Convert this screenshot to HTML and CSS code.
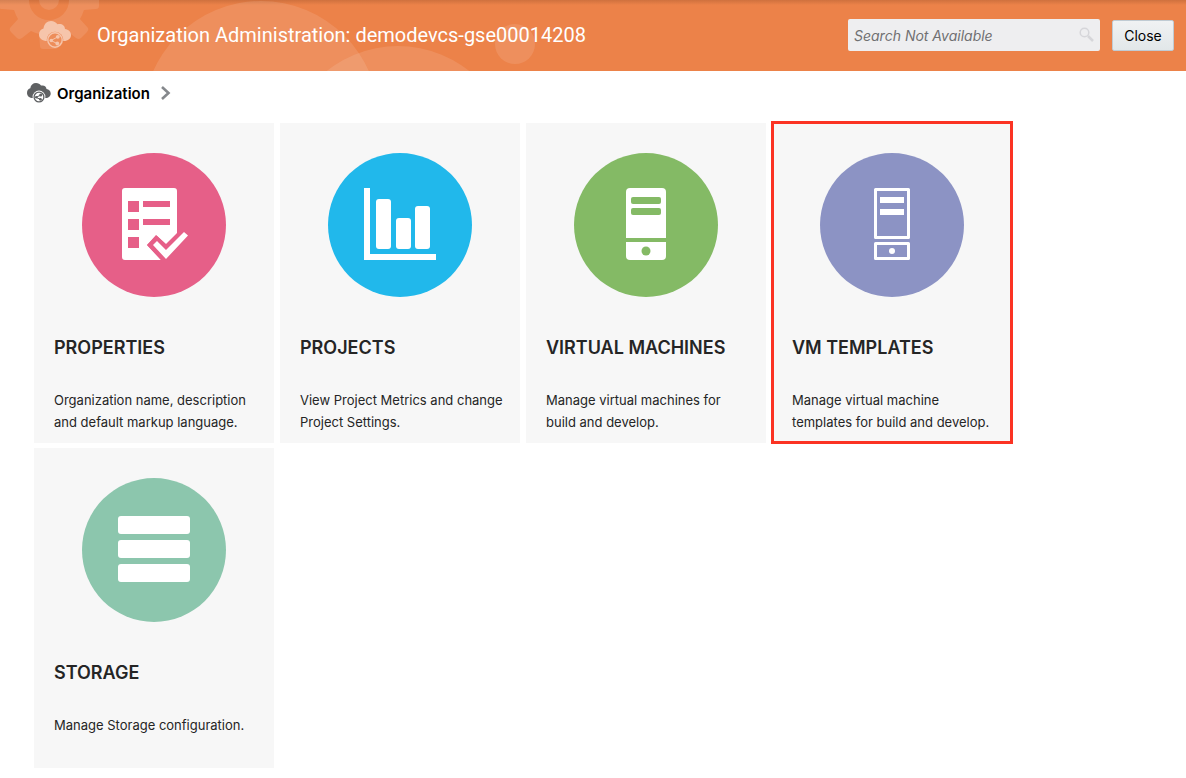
FILE: index.html
```html
<!DOCTYPE html>
<html lang="en">
<head>
<meta charset="utf-8">
<title>Organization Administration</title>
<link rel="stylesheet" href="styles.css">
</head>
<body>
<svg class="defs" width="0" height="0" aria-hidden="true">
  <symbol id="cloud" viewBox="0 0 32 28">
    <path d="M8 20C3.500 20 0 17.500 0 13.500 0 10 2 8 4.500 7.500 5 3 8 0 12 0c3 0 5 1.300 6.500 3.300 4-1 7.500 1.200 7.500 4.700 3.500.5 6 2.500 6 6 0 3.500-3 6-7 6h-1.500a8 8 0 0 0-15.500 0z"/>
    <circle cx="16" cy="19" r="8.300" fill="#ed8d5a"/>
    <circle cx="16" cy="19" r="7.200" fill="none" stroke="currentColor" stroke-width="1.400"/>
    <path d="M12 19.500 18.500 16M12 19.500 18 22.500" fill="none" stroke="currentColor" stroke-width="1"/>
    <circle cx="12.200" cy="19.500" r="1.700"/><circle cx="18.800" cy="15.800" r="1.900"/><circle cx="18.300" cy="22.500" r="1.900"/>
  </symbol>
</svg>
<header class="banner">
  <svg class="banner-art" width="600" height="71" viewBox="0 0 600 71" aria-hidden="true">
    <g fill="#fff" fill-opacity=".11">
      <path fill-rule="evenodd" d="M84 -10L96 -9Q99 -9 99 -6V6Q99 9 96 9L84 10Q82 16 80 19L88 28Q89 30 87 32L81 38Q79 40 76 38L67 31Q63 33 59 34L58 46Q58 49 55 49H43Q40 49 40 46L39 34Q35 33 31 31L22 38Q19 40 17 38L11 32Q9 30 10 28L18 19Q16 16 14 10L2 9Q-1 9 -1 6V-10ZM29 0a20 20 0 0 0 40 0a20 20 0 0 0 -40 0zM39 0a10 10 0 0 1 20 0a10 10 0 0 1 -20 0z"/>
      <circle cx="261" cy="119" r="118"/>
      <circle cx="398" cy="160" r="114"/>
      <circle cx="515" cy="44" r="20"/>
    </g>
  </svg>
  <svg class="banner-logo" width="32" height="28" aria-hidden="true"><use href="#cloud"/></svg>
  <h1 class="banner-title">Organization Administration: demodevcs-gse00014208</h1>
  <form class="search">
    <input class="search-input" type="text" placeholder="Search Not Available" aria-label="Search" disabled>
    <svg class="search-icon" width="16" height="16" viewBox="0 0 16 16" fill="none" stroke="#d6d6da" aria-hidden="true"><circle cx="5.500" cy="5.500" r="4.300" stroke-width="1.500"/><path d="M9 9l5 5" stroke-width="2.500"/></svg>
  </form>
  <button class="close" type="button">Close</button>
</header>
<nav class="crumbs" aria-label="Breadcrumb">
  <svg class="crumb-icon" width="24" height="20" viewBox="0 0 24 20" aria-hidden="true">
    <path d="M6 15C2.500 15 0 13 0 10c0-3 1.500-4.300 3.300-4.700C3.700 2 6 0 9 0c2.300 0 4 1 5 2.600 3-.8 5.500.9 5.500 3.500 2.500.3 4.200 2 4.200 4.400 0 2.500-2 4.500-5 4.500z" fill="#5f6163"/>
    <circle cx="12" cy="14" r="6.400" fill="#fff"/><circle cx="12" cy="14" r="4.900" fill="none" stroke="#5f6163" stroke-width="1.300"/>
    <path d="M9 14.300l5-2.300M9 14.300l4.500 2.200" stroke="#5f6163"/>
    <g fill="#5f6163"><circle cx="9.300" cy="14.300" r="1.300"/><circle cx="13.700" cy="11.900" r="1.500"/><circle cx="13.400" cy="16.300" r="1.400"/></g>
  </svg>
  <a class="crumb" href="#">Organization</a>
  <svg class="chevron" width="12" height="16" viewBox="0 0 12 16" fill="none" stroke="#85888c" stroke-width="2.600" aria-hidden="true"><path d="M2 2l6.500 6L2 14"/></svg>
</nav>
<main class="cards">
  <a class="card" href="#">
    <svg class="card-icon" viewBox="0 0 144 144" aria-hidden="true">
      <circle cx="72" cy="72" r="72" fill="#e65f88"/>
      <path fill="#fff" d="M43 35H92a3 3 0 0 1 3 3V80L84 91 74 82 65 92 79 107H43a3 3 0 0 1-3-3V38a3 3 0 0 1 3-3z"/>
      <path fill="#e65f88" d="M46 48h11v11H46zM61 48h27v6H61zM46 66h11v11H46zM61 66h27v6H61zM46 84h11v11H46z"/>
      <path fill="#e65f88" d="M65 92L74.500 82.500 84 91.500 95 81V107H79z"/>
      <path fill="#fff" d="M71 92l4-4 9 9 18-18 4 3.500L84 106z"/>
    </svg>
    <h2 class="card-title">PROPERTIES</h2>
    <p class="card-text">Organization name, description and default markup language.</p>
  </a>
  <a class="card" href="#">
    <svg class="card-icon" viewBox="0 0 144 144" aria-hidden="true">
      <circle cx="72" cy="72" r="72" fill="#21b8eb"/>
      <g fill="#fff"><path d="M36 35h6v66h66v6H36z"/><rect x="48" y="46" width="15" height="50" rx="3"/><rect x="68" y="65" width="15" height="31" rx="3"/><rect x="87" y="53" width="15" height="43" rx="3"/></g>
    </svg>
    <h2 class="card-title">PROJECTS</h2>
    <p class="card-text">View Project Metrics and change Project Settings.</p>
  </a>
  <a class="card" href="#">
    <svg class="card-icon" viewBox="0 0 144 144" aria-hidden="true">
      <circle cx="72" cy="72" r="72" fill="#84ba65"/>
      <rect x="52" y="35" width="40" height="72" rx="4" fill="#fff"/>
      <g fill="#84ba65"><rect x="57" y="44" width="30" height="7" rx="2"/><rect x="57" y="55" width="30" height="7" rx="2"/><rect x="52" y="85" width="40" height="4"/><circle cx="72" cy="98" r="4.500"/></g>
    </svg>
    <h2 class="card-title">VIRTUAL MACHINES</h2>
    <p class="card-text">Manage virtual machines for build and develop.</p>
  </a>
  <a class="card card-selected" href="#">
    <svg class="card-icon" viewBox="0 0 144 144" aria-hidden="true">
      <circle cx="72" cy="72" r="72" fill="#8c93c4"/>
      <g fill="none" stroke="#fff" stroke-width="3" stroke-linejoin="round"><rect x="55.500" y="36.500" width="33" height="48"/><rect x="55.500" y="90.500" width="33" height="15"/></g>
      <g fill="#fff"><rect x="60" y="44" width="24" height="6"/><rect x="60" y="56" width="24" height="6"/><circle cx="72" cy="98" r="3"/></g>
    </svg>
    <h2 class="card-title">VM TEMPLATES</h2>
    <p class="card-text">Manage virtual machine templates for build and develop.</p>
  </a>
  <a class="card" href="#">
    <svg class="card-icon" viewBox="0 0 144 144" aria-hidden="true">
      <circle cx="72" cy="72" r="72" fill="#8cc6ad"/>
      <g fill="#fff"><rect x="36" y="38" width="72" height="18" rx="3"/><rect x="36" y="62" width="72" height="18" rx="3"/><rect x="36" y="86" width="72" height="18" rx="3"/></g>
    </svg>
    <h2 class="card-title">STORAGE</h2>
    <p class="card-text">Manage Storage configuration.</p>
  </a>
</main>
</body>
</html>
```
FILE: styles.css
```css
* { box-sizing: border-box; }
body { margin: 0; background: #fff; color: #252525; font-family: Inter, "Liberation Sans", sans-serif; font-size: 13px; }
a { color: inherit; text-decoration: none; }
.defs { position: absolute; }

.banner {
  position: relative;
  display: flex;
  align-items: center;
  gap: 12px;
  min-height: 71px;
  padding: 0 12px 1px 39px;
  background: linear-gradient(#cf713e, #ec8249 5px);
  overflow: hidden;
}
.banner-art { position: absolute; left: 0; top: 0; }
.banner-logo { position: relative; flex: none; margin-right: 14px; fill: currentColor; color: #f6c5ab; }
.banner-title { position: relative; flex: 1; margin: 0; color: #fff; font-family: Roboto, Inter, sans-serif; font-size: 20px; font-weight: 400; line-height: 24px; white-space: nowrap; }
.search { position: relative; width: 252px; }
.search-input {
  display: block;
  width: 100%;
  height: 32px;
  padding: 0 28px 0 6px;
  border: 0;
  border-radius: 2px;
  background: #eeeef0;
  font: italic 14px Inter, "Liberation Sans", sans-serif;
}
.search-input::placeholder { color: #707072; opacity: 1; }
.search-icon { position: absolute; right: 5px; top: 8px; }
.close {
  width: 62px;
  height: 31px;
  padding: 0;
  border: 1px solid #c0cbd3;
  border-radius: 2px;
  background: linear-gradient(#f0f2f3, #e2e7e9);
  color: #000;
  font: 14px Inter, "Liberation Sans", sans-serif;
}

.crumbs { display: flex; align-items: center; gap: 6px; height: 44px; padding: 0 27px; }
.crumb { color: #000; font-size: 15px; font-weight: 600; }
.chevron { margin-left: 4px; }

.cards { display: grid; grid-template-columns: repeat(auto-fill, 240px); gap: 5px 6px; padding: 8px 34px 10px; }
.card { position: relative; min-height: 320px; padding: 30px 16px 0 20px; background: #f7f7f7; }
.card-icon { display: block; width: 144px; height: 144px; margin: 0 28px; }
.card-title { margin: 39px 0 29px; font-size: 18px; font-weight: 600; line-height: 24px; white-space: nowrap; }
.card-text { margin: 0; line-height: 22px; }
.card-selected::after { content: ""; position: absolute; inset: -2px -1px -1px; border: 3px solid #fb3323; }
```
